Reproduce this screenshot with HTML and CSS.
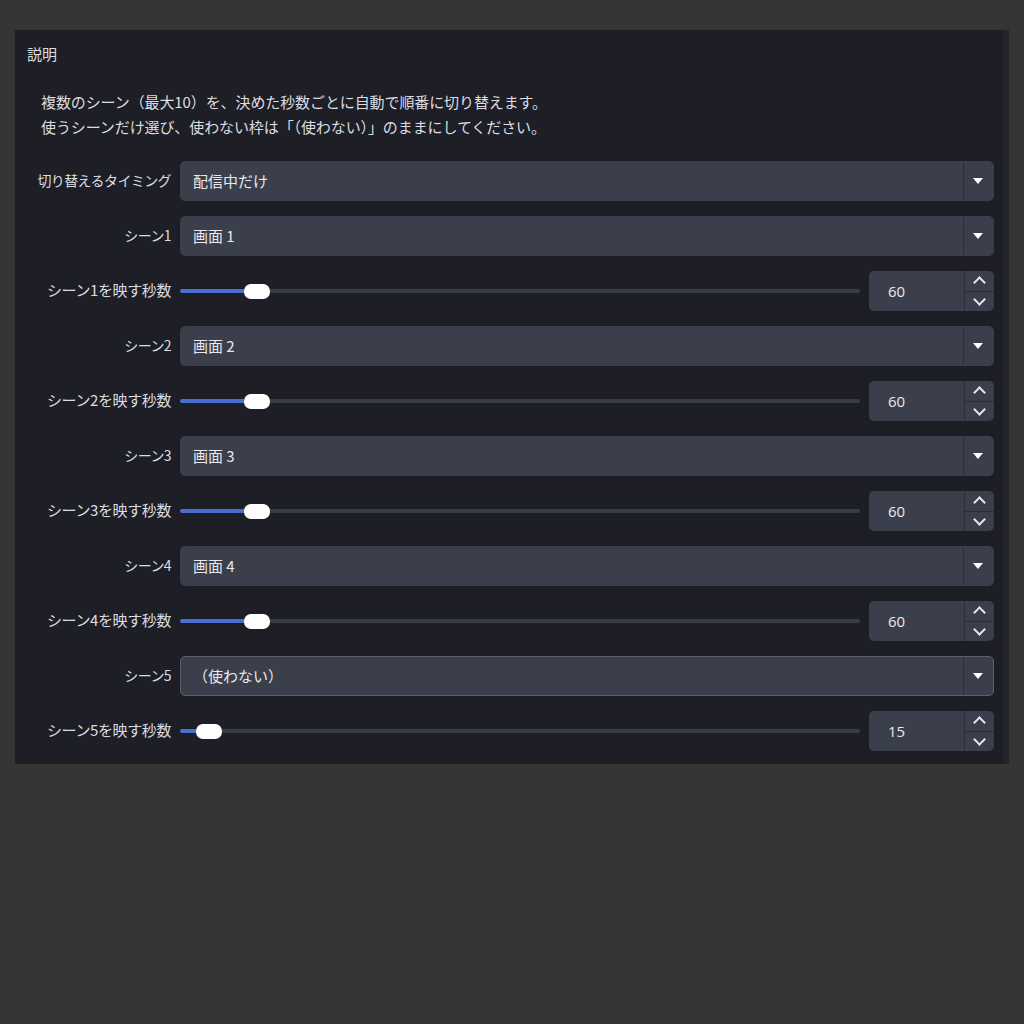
FILE: index.html
```html
<!DOCTYPE html>
<html lang="ja">
<head>
    <meta charset="UTF-8">
    <title>シーン切り替え</title>
    <link rel="stylesheet" href="styles.css">
</head>
<body>
<div class="panel">
    <div class="panel-title">説明</div>
    <div class="desc">
        <p>複数のシーン（最大10）を、決めた秒数ごとに自動で順番に切り替えます。</p>
        <p>使うシーンだけ選び、使わない枠は「（使わない）」のままにしてください。</p>
    </div>
    <div class="form">
        <div class="row">
            <label class="lbl">切り替えるタイミング</label>
            <div class="select"><span class="val">配信中だけ</span><span class="arrow"></span></div>
        </div>

        <div class="row">
            <label class="lbl">シーン1</label>
            <div class="select"><span class="val">画面 1</span><span class="arrow"></span></div>
        </div>
        <div class="row">
            <label class="lbl sec">シーン1を映す秒数</label>
            <div class="slider"><span class="fill" style="width:64px"></span><span class="thumb"></span><span class="rest"></span></div>
            <div class="spin"><span class="num">60</span><span class="btns"><span class="up"></span><span class="down"></span></span></div>
        </div>

        <div class="row">
            <label class="lbl">シーン2</label>
            <div class="select"><span class="val">画面 2</span><span class="arrow"></span></div>
        </div>
        <div class="row">
            <label class="lbl sec">シーン2を映す秒数</label>
            <div class="slider"><span class="fill" style="width:64px"></span><span class="thumb"></span><span class="rest"></span></div>
            <div class="spin"><span class="num">60</span><span class="btns"><span class="up"></span><span class="down"></span></span></div>
        </div>

        <div class="row">
            <label class="lbl">シーン3</label>
            <div class="select"><span class="val">画面 3</span><span class="arrow"></span></div>
        </div>
        <div class="row">
            <label class="lbl sec">シーン3を映す秒数</label>
            <div class="slider"><span class="fill" style="width:64px"></span><span class="thumb"></span><span class="rest"></span></div>
            <div class="spin"><span class="num">60</span><span class="btns"><span class="up"></span><span class="down"></span></span></div>
        </div>

        <div class="row">
            <label class="lbl">シーン4</label>
            <div class="select"><span class="val">画面 4</span><span class="arrow"></span></div>
        </div>
        <div class="row">
            <label class="lbl sec">シーン4を映す秒数</label>
            <div class="slider"><span class="fill" style="width:64px"></span><span class="thumb"></span><span class="rest"></span></div>
            <div class="spin"><span class="num">60</span><span class="btns"><span class="up"></span><span class="down"></span></span></div>
        </div>

        <div class="row">
            <label class="lbl">シーン5</label>
            <div class="select focus"><span class="val">（使わない）</span><span class="arrow"></span></div>
        </div>
        <div class="row">
            <label class="lbl sec">シーン5を映す秒数</label>
            <div class="slider"><span class="fill" style="width:16px"></span><span class="thumb"></span><span class="rest"></span></div>
            <div class="spin"><span class="num">15</span><span class="btns"><span class="up"></span><span class="down"></span></span></div>
        </div>
    </div>
</div>
</body>
</html>
```

FILE: styles.css
```css
*{
    margin: 0;
    padding: 0;
    box-sizing: border-box;
}
body{
    background-color: #353535;
    padding: 30px 0 0 15px;
    font-family: "Noto Sans CJK JP", "Noto Sans", sans-serif;
    color: #dcdde2;
}
.panel{
    width: 994px;
    height: 734px;
    background-color: #1e1f26;
    border-right: 6px solid #24252c;
}
.panel-title{
    height: 46px;
    padding: 12px 0 0 12px;
    font-size: 15px;
    line-height: 24px;
}
.desc{
    padding: 13px 0 0 26px;
    font-size: 15px;
    line-height: 25px;
    letter-spacing: -0.1px;
}
.form{
    padding-top: 22px;
    display: flex;
    flex-direction: column;
    gap: 15px;
}
.row{
    display: flex;
    align-items: center;
    height: 40px;
}
.lbl{
    width: 165px;
    padding-right: 9px;
    text-align: right;
    font-size: 14px;
    letter-spacing: -0.6px;
    white-space: nowrap;
    align-self: flex-start;
    line-height: 38px;
}
.lbl.sec{
    font-size: 15px;
    letter-spacing: -0.4px;
}
.select{
    width: 814px;
    height: 40px;
    display: flex;
    background-color: #3b3e4b;
    border-radius: 5px;
    border: 1px solid #3b3e4b;
}
.select.focus{
    border-color: #5b5e6b;
}
.val{
    flex: 1;
    padding-left: 12px;
    font-size: 15px;
    line-height: 38px;
    color: #e8e9ee;
}
.arrow{
    width: 30px;
    border-left: 1px solid #2b2d37;
    position: relative;
}
.arrow::after{
    content: "";
    position: absolute;
    left: 9px;
    top: 16px;
    border-left: 5.5px solid transparent;
    border-right: 5.5px solid transparent;
    border-top: 6px solid #ffffff;
}
.slider{
    width: 680px;
    margin-right: 9px;
    display: flex;
    align-items: center;
}
.fill{
    height: 4px;
    background-color: #4b6dd6;
    border-radius: 2px 0 0 2px;
}
.thumb{
    width: 26px;
    height: 15px;
    border-radius: 7px;
    background-color: #ffffff;
}
.rest{
    flex: 1;
    height: 4px;
    background-color: #393c48;
    border-radius: 0 2px 2px 0;
}
.spin{
    width: 125px;
    height: 40px;
    display: flex;
    background-color: #3b3e4b;
    border-radius: 5px;
}
.num{
    flex: 1;
    padding-left: 19px;
    font-size: 15px;
    line-height: 41px;
    font-family: "Open Sans", "Noto Sans", sans-serif;
    color: #e8e9ee;
}
.btns{
    width: 30px;
    border-left: 1px solid #2b2d37;
    display: flex;
    flex-direction: column;
}
.up, .down{
    flex: 1;
    position: relative;
}
.up{
    border-bottom: 1px solid #2b2d37;
}
.up::after, .down::after{
    content: "";
    position: absolute;
    left: 10px;
    width: 7px;
    height: 7px;
    border-left: 2px solid #e6e7ec;
    border-top: 2px solid #e6e7ec;
}
.up::after{
    top: 7px;
    transform: rotate(45deg);
}
.down::after{
    top: 3px;
    transform: rotate(225deg);
}
```
